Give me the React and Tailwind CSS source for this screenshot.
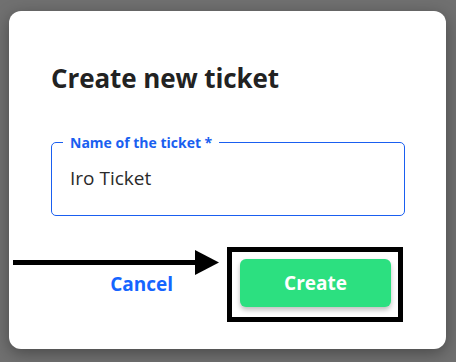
export default function App() {
  return (
    <div
      className="h-[362px] w-[456px] bg-[#707070] pt-[11px] pl-[9px]"
      style={{ fontFamily: "'Open Sans', Lato, sans-serif" }}
    >
      <div className="relative flex h-[338px] w-[437px] flex-col rounded-[12px] bg-white px-[42px] pt-[49px] shadow-[0_4px_16px_rgba(0,0,0,0.35)]">
        {/* Title */}
        <h2 className="text-[26px] leading-[36px] font-bold tracking-[-0.1px] text-[#222]">Create new ticket</h2>

        {/* Field */}
        <fieldset className="mt-[39px] h-[81px] w-[354px] rounded-[5px] border border-[#1a5ff0] pl-[11px] pr-3">
          <legend className="px-[7px] text-[14px] leading-[15px] font-bold text-[#1a5ff0]">Name of the ticket *</legend>
          <div className="ml-[7px] mt-[16px] text-[19px] leading-[24px] text-[#2a2a2a]">Iro Ticket</div>
        </fieldset>

        {/* Actions */}
        <div className="mt-[31px] flex items-center justify-end pr-[1px]">
          <button className="mr-[54px] text-[19px] font-bold text-[#1565ff]">Cancel</button>
          <div className="h-[75px] w-[176px] border-[5px] border-black pl-[8px] pt-[7px]">
            <button className="h-[48px] w-[151px] rounded-[6px] bg-[#2ce080] text-[19px] font-bold text-white shadow-[0_3px_5px_rgba(0,0,0,0.25)]">
              Create
            </button>
          </div>
        </div>

        {/* Annotation arrow */}
        <svg className="absolute left-[4px] top-[239px]" width="208" height="26" viewBox="0 0 208 26">
          <rect x="0" y="10" width="184" height="5" fill="black" />
          <polygon points="182,0 206,12.5 182,25" fill="black" />
        </svg>
      </div>
    </div>
  );
}
